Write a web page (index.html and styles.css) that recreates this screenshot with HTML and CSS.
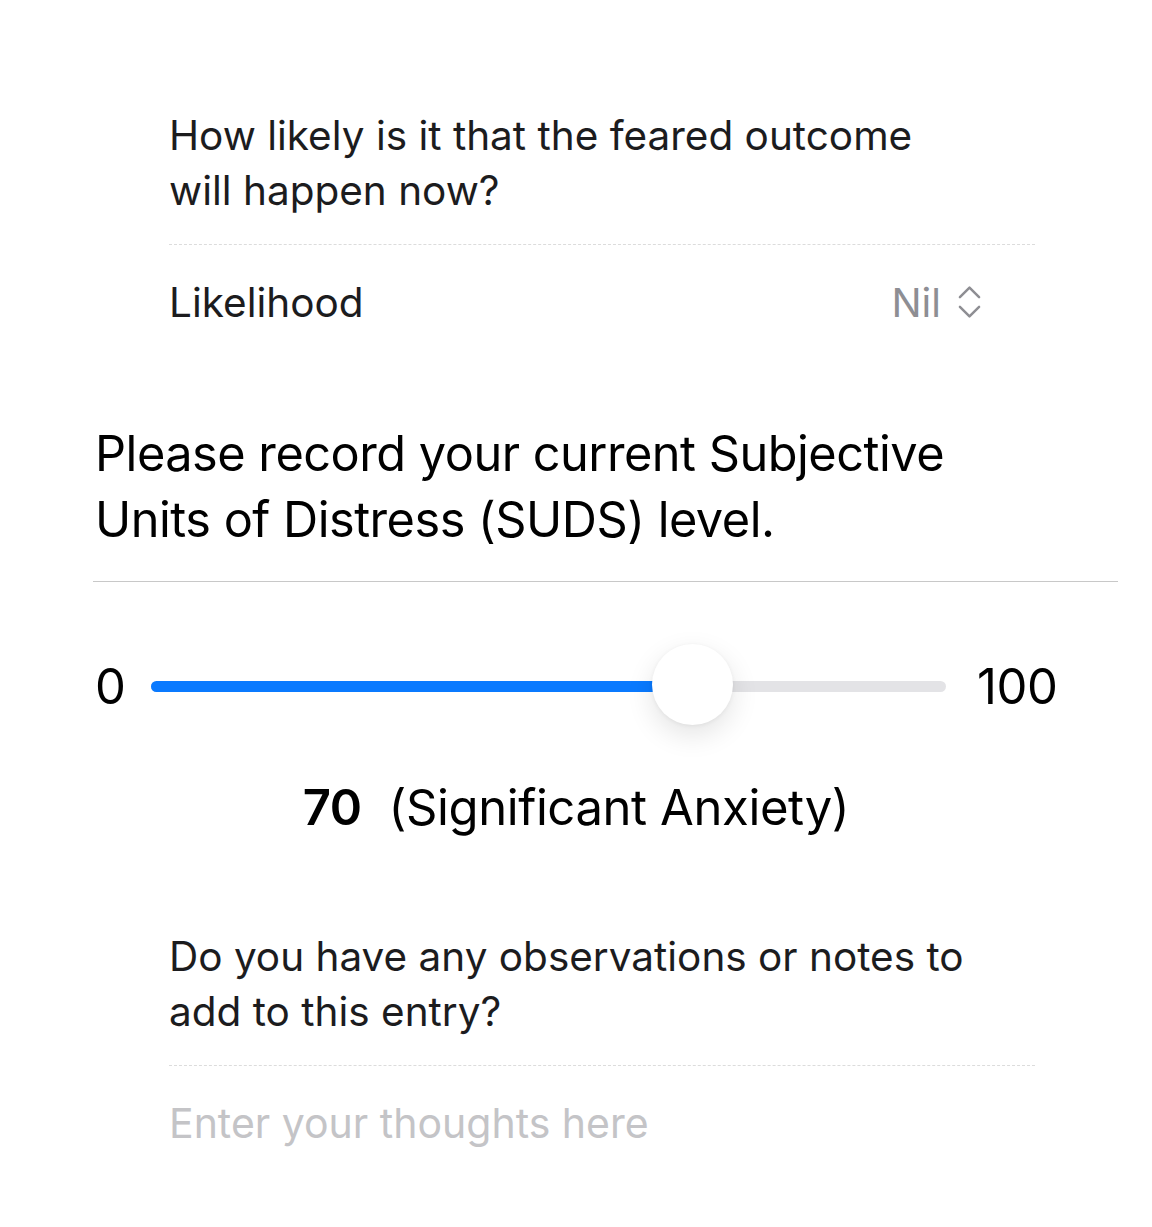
FILE: index.html
```html
<!DOCTYPE html>
<html>
<head>
<meta charset="utf-8">
<link rel="stylesheet" href="styles.css">
</head>
<body>
<div class="page">
  <section class="group">
    <div class="question">How likely is it that the feared outcome will happen now?</div>
    <div class="divider"></div>
    <div class="row">
      <span class="row-label">Likelihood</span>
      <span class="row-value">Nil
        <svg class="updown" width="23" height="34" viewBox="0 0 24 34"><path d="M2 12 L12 2 L22 12 M2 22 L12 32 L22 22" fill="none" stroke="#8e8e93" stroke-width="2.6" stroke-linecap="round" stroke-linejoin="round"/></svg>
      </span>
    </div>
  </section>

  <section class="suds">
    <h2 class="suds-title">Please record your current Subjective Units of Distress (SUDS) level.</h2>
    <div class="suds-divider"></div>
    <div class="slider-row">
      <span class="slider-end slider-min">0</span>
      <div class="slider">
        <div class="track">
          <div class="fill" style="width: 63.5%"></div>
        </div>
        <div class="thumb" style="left: 68%"></div>
      </div>
      <span class="slider-end">100</span>
    </div>
    <div class="reading"><b>70</b>&nbsp; (Significant Anxiety)</div>
  </section>

  <section class="group notes">
    <div class="question">Do you have any observations or notes to add to this entry?</div>
    <div class="divider"></div>
    <div class="placeholder">Enter your thoughts here</div>
  </section>
</div>
</body>
</html>
```

FILE: styles.css
```css
html, body {
  margin: 0;
  padding: 0;
  background: #ffffff;
}
body {
  font-family: Inter, "Noto Sans", "Liberation Sans", sans-serif;
  color: #000;
}
.page {
  width: 1152px;
  padding-top: 108px;
}
.group {
  padding-left: 169px;
  width: 866px;
}
.question {
  font-size: 40.5px;
  line-height: 55px;
  color: #1c1c1e;
  width: 810px;
}
.divider {
  margin-top: 26px;
  height: 0;
  border-top: 1.5px dashed #dcdcdc;
}
.row {
  display: flex;
  align-items: center;
  justify-content: space-between;
  height: 114px;
  padding-right: 54px;
}
.row-label {
  font-size: 40.5px;
  color: #1c1c1e;
}
.row-value {
  display: flex;
  align-items: center;
  gap: 17px;
  font-size: 40px;
  color: #8e8e93;
}
.suds {
  padding-left: 95px;
  padding-right: 34px;
  margin-top: 62px;
}
.suds-title {
  margin: 0;
  font-weight: 400;
  font-size: 48.7px;
  line-height: 66px;
  letter-spacing: -0.5px;
  width: 960px;
}
.suds-divider {
  margin-top: 28px;
  margin-left: -2px;
  border-top: 1.5px solid #c8c8c8;
}
.slider-row {
  display: flex;
  align-items: center;
  height: 80px;
  margin-top: 64px;
}
.slider-end {
  font-size: 49px;
  letter-spacing: -0.4px;
}
.slider-min {
  width: 56px;
}
.slider {
  position: relative;
  width: 795px;
  margin-right: 31px;
  height: 80px;
  display: flex;
  align-items: center;
}
.track {
  width: 100%;
  height: 11px;
  border-radius: 6px;
  background: #e3e3e6;
  overflow: hidden;
}
.fill {
  height: 100%;
  background: #0a7aff;
}
.thumb {
  position: absolute;
  top: -2px;
  width: 81px;
  height: 81px;
  margin-left: -40px;
  border-radius: 50%;
  background: #fff;
  box-shadow: 0 10px 28px rgba(0,0,0,0.11), 0 1px 4px rgba(0,0,0,0.06);
}
.reading {
  text-align: center;
  font-size: 49px;
  line-height: 60px;
  letter-spacing: -0.4px;
  margin-top: 52px;
  padding-right: 61px;
}
.reading b {
  font-weight: 600;
}
.notes {
  margin-top: 91px;
}
.placeholder {
  font-size: 41px;
  line-height: 48px;
  color: #c4c4c7;
  margin-top: 33px;
}
```
